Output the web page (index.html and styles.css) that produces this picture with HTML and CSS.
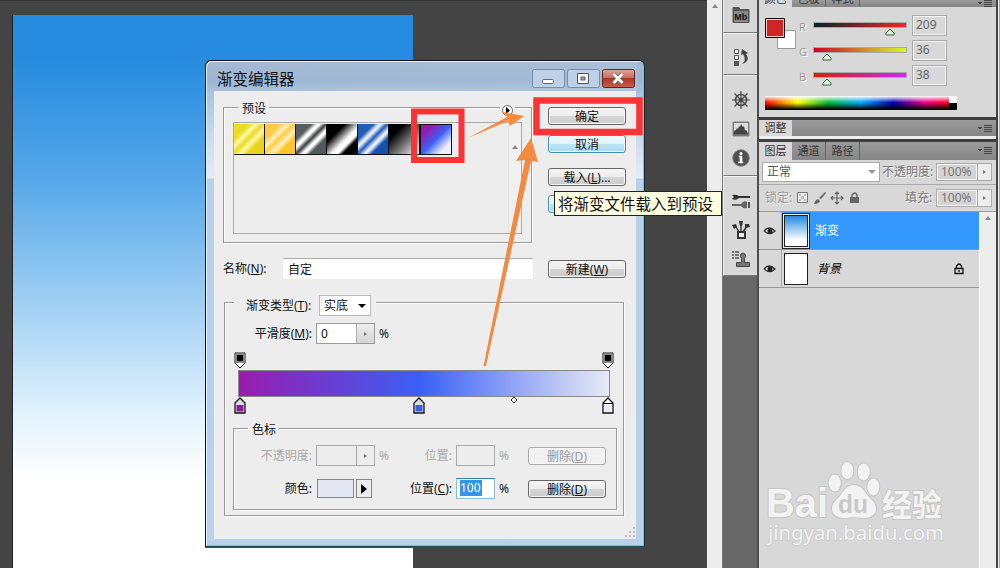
FILE: index.html
```html
<!DOCTYPE html>
<html lang="zh-CN">
<head>
<meta charset="utf-8">
<title>渐变编辑器</title>
<link rel="stylesheet" href="styles.css">
</head>
<body>
<div class="app">
  <main class="canvas"><div class="document"></div></main>
  <div class="scrollbar main-scroll"><i class="up"></i></div>

  <aside class="dock">
    <section class="dock-group g1">
      <svg width="20" height="20" viewBox="0 0 20 20"><path d="M2 17.500V2.500h6l1 2h9v13z" fill="#555" stroke="#555"/><path d="M3 6h14v11H3z" fill="#8a8a8a"/><text x="3.200" y="15" class="mb">Mb</text></svg>
    </section>
    <section class="dock-group g2"><div class="grip"></div>
      <svg width="20" height="20" viewBox="0 0 20 20"><path d="M3.500 2.500h4v4h-4zM3.500 8.500h4v4h-4z" fill="#f5f5f5" stroke="#555"/><path d="M3 14h5v5H3z" fill="#555"/><path d="M11 17q9-3 4-10l2-1-6-4-1 6 2-1q4 6-1 10z" fill="#444"/></svg>
    </section>
    <section class="dock-group g3"><div class="grip"></div>
      <svg width="20" height="20" viewBox="0 0 20 20" fill="none" stroke="#484848"><circle cx="10" cy="10" r="5.500" stroke-width="1.600"/><circle cx="10" cy="10" r="1.500" stroke-width="1.600"/><path d="M10 1v18M1 10h18M3.500 3.500l13 13M16.500 3.500l-13 13" stroke-width="1.200"/></svg>
      <svg width="20" height="20" viewBox="0 0 20 20"><path d="M2 3h16v14H2z" fill="#686868" stroke="#888"/><path d="M3 4h14v11H3z" fill="#ddd"/><path d="M3 15v-3l2-1 1-2 1 1 1-3 1 1 1-3 2 3 1-1 1 4 2 1 1 3z" fill="#444"/></svg>
      <svg width="20" height="20" viewBox="0 0 20 20"><circle cx="10" cy="10" r="8.200" fill="#505050" stroke="#777"/><circle cx="10" cy="5.500" r="1.500" fill="#fff"/><path d="M8 8h3v6h1v1H7.500v-1H9V9H8z" fill="#fff" stroke="#fff" stroke-width=".6"/></svg>
    </section>
    <section class="dock-group g4"><div class="grip"></div>
      <svg width="20" height="20" viewBox="0 0 20 20"><path d="M1 4q4-1 7 1h11v2H8q-3 3-7 1l2-2z" fill="#303030"/><path d="M1 13h9q3-4 6-2v6q-4 1-6-2H1z" fill="#666"/><path d="M18 11v6" stroke="#555" stroke-width="2"/></svg>
      <svg width="20" height="20" viewBox="0 0 20 20" fill="none" stroke="#333"><path d="M8 12L4 5M10 12V3M12 12l4-6" stroke-width="1.400"/><path d="M1 5l4-1 1 3-3 2zM8 1h4l-1 5H9zM14 4l4 0 1 3-5 1z" fill="#333" stroke="none"/><path d="M7 12h7v6H7z" fill="#eee" stroke-width="2"/></svg>
      <svg width="20" height="20" viewBox="0 0 20 20"><path d="M1 3h2M4 3h4M1 6h2M4 6h4M1 9h2M4 9h4" stroke="#555" stroke-width="1.300"/><path d="M5.500 13.500h5v-4q-2-2-.5-4.500 2-2 4 0 1.500 2.500-.5 4.500v4h5v4h-13z" fill="#777" stroke="#444"/></svg>
    </section>
  </aside>

  <aside class="panels">
    <section class="panel color-panel">
      <header class="tabs cut"><span class="tab on">颜色</span><span class="tab">色板</span><span class="tab">样式</span><i class="menu"></i></header>
      <div class="color-body">
        <svg class="swatches" width="34" height="34" viewBox="0 0 34 34"><path d="M12.500 12.500h18v18h-18z" fill="#fff" stroke="#999"/><path d="M.5.5h19v19H.5z" fill="#ecc" stroke="#111"/><path d="M2 2h16v16H2z" fill="#d12426"/></svg>
        <div class="channels">
          <div class="channel"><b>R</b><div class="track"><div class="ramp r"></div><svg style="margin-left:72px" width="10" height="8" viewBox="0 0 10 8"><path d="M1 7V5l4-4 4 4v2z" fill="#cfc" stroke="#555"/></svg></div><span class="num">209</span></div>
          <div class="channel"><b>G</b><div class="track"><div class="ramp g"></div><svg style="margin-left:9px" width="10" height="8" viewBox="0 0 10 8"><path d="M1 7V5l4-4 4 4v2z" fill="#cfc" stroke="#555"/></svg></div><span class="num">36</span></div>
          <div class="channel"><b>B</b><div class="track"><div class="ramp b"></div><svg style="margin-left:9px" width="10" height="8" viewBox="0 0 10 8"><path d="M1 7V5l4-4 4 4v2z" fill="#cfc" stroke="#555"/></svg></div><span class="num">38</span></div>
        </div>
      </div>
      <div class="spectrum"><i></i></div>
    </section>
    <section class="panel adjust-panel"><header class="tabs"><span class="tab on">调整</span><i class="menu"></i></header></section>
    <section class="panel layers-panel">
      <header class="tabs"><span class="tab on">图层</span><span class="tab">通道</span><span class="tab">路径</span><i class="menu"></i></header>
      <div class="opts blend-row"><div class="blend"><span>正常</span><i></i></div><label>不透明度:</label><div class="pct"><span>100%</span><i></i></div></div>
      <div class="opts lock-row"><label class="lock-label">锁定:</label>
        <svg width="66" height="14" viewBox="0 0 66 14"><path d="M1.500 1.500h10v10h-10z" fill="#eee" stroke="#777"/><path d="M3 3h2v2H3zM8 3h2v2H8zM5 5h3v3H5zM3 8h2v2H3zM8 8h2v2H8z" fill="#bbb"/><path d="M18 13q1-4 4-5l2 2q-1 3-6 3M23 7l6-6 1 1-5 6z" fill="#666"/><path d="M41 1v12M35 7h12M39 3l2-2 2 2M39 11l2 2 2-2M37 5l-2 2 2 2M45 5l2 2-2 2" fill="none" stroke="#666" stroke-width="1.200"/><path d="M56 7V4q3-4 5 0v3" fill="none" stroke="#666" stroke-width="1.500"/><path d="M54 6h9v6h-9z" fill="#666"/></svg>
        <label class="fill-label">填充:</label><div class="pct"><span>100%</span><i></i></div></div>
      <div class="layers">
        <div class="layer-list">
          <div class="layer selected"><div class="eye"><svg width="13" height="12" viewBox="0 0 13 12"><path d="M1 6q5-6 11 0-5 5-11 0" fill="#eee" stroke="#333" stroke-width="1.300"/><circle cx="7" cy="6" r="2.500" fill="#222"/></svg></div><div class="thumb sky"></div><span>渐变</span></div>
          <div class="layer"><div class="eye"><svg width="13" height="12" viewBox="0 0 13 12"><path d="M1 6q5-6 11 0-5 5-11 0" fill="#eee" stroke="#333" stroke-width="1.300"/><circle cx="7" cy="6" r="2.500" fill="#222"/></svg></div><div class="thumb"></div><span class="bg-name">背景</span><svg class="lock" width="10" height="12" viewBox="0 0 10 12"><path d="M2.500 5V3q2.500-4 5 0v2M1 5.500h8v5H1zM5 7v2" fill="none" stroke="#111" stroke-width="1.300"/></svg></div>
        </div>
        <div class="scrollbar"><i class="up"></i></div>
      </div>
    </section>
  </aside>

  <div class="dialog">
    <header class="titlebar"><h1>渐变编辑器</h1>
      <div class="winbtns">
        <svg width="33" height="19" viewBox="0 0 33 19"><rect x=".5" y=".5" width="32" height="18" rx="2" class="wb"/><rect x="10.500" y="10.500" width="11" height="4" rx="1" fill="#fff" stroke="#666"/></svg>
        <svg width="33" height="19" viewBox="0 0 33 19"><rect x=".5" y=".5" width="32" height="18" rx="2" class="wb"/><path d="M10.500 4.500h11v10h-11z" fill="#fff" stroke="#555"/><path d="M14 8h4v3h-4z" fill="#9ab" stroke="#555"/></svg>
        <svg width="33" height="19" viewBox="0 0 33 19"><defs><linearGradient id="red" x2="0" y2="1"><stop stop-color="#dfa69d"/><stop offset=".48" stop-color="#c9695f"/><stop offset=".5" stop-color="#ad3326"/><stop offset="1" stop-color="#c9604c"/></linearGradient></defs><rect x=".5" y=".5" width="32" height="18" rx="2" fill="url(#red)" stroke="#5c2528"/><path d="M11.500 5l9 9M20.500 5l-9 9" stroke="#665" stroke-width="4.500"/><path d="M11.500 5l9 9M20.500 5l-9 9" stroke="#fff" stroke-width="3"/></svg>
      </div>
    </header>
    <div class="content">
      <div class="top">
        <div class="group presets"><div class="legend-row"><span class="legend">预设</span><svg class="flyout" width="13" height="13" viewBox="0 0 13 13"><circle cx="6.500" cy="6.500" r="5" fill="#fff" stroke="#666"/><path d="M5 3v7l4-3.500z" fill="#000"/></svg></div>
          <div class="preset-box"><div class="preset-list"><i class="p1"></i><i class="p2"></i><i class="p3"></i><i class="p4"></i><i class="p5"></i><i class="p6"></i><i class="p7"></i></div><div class="preset-scroll"><i class="up"></i></div></div>
        </div>
        <div class="actions"><button>确定</button><button class="hot">取消</button><button>载入(<u>L</u>)...</button><button class="hot save" aria-label="存储"></button></div>
      </div>
      <div class="name-row"><label>名称(<u>N</u>):</label><div class="name-input">自定</div><button>新建(<u>W</u>)</button></div>
      <div class="group editor">
        <div class="type-legend"><label>渐变类型(<u>T</u>):</label><div class="select">实底<i></i></div></div>
        <div class="smooth"><label>平滑度(<u>M</u>):</label><div class="spin"><span>0</span><i></i></div><span>%</span></div>
        <div class="stops opacity-stops">
          <svg width="12" height="17" viewBox="0 0 12 17"><path d="M1 1h10v10l-5 5-5-5z" fill="#fff" stroke="#111"/><path d="M2 2h8v9H2z" fill="#888"/><path d="M3 3h6v6H3z"/></svg>
          <svg width="12" height="17" viewBox="0 0 12 17"><path d="M1 1h10v10l-5 5-5-5z" fill="#fff" stroke="#111"/><path d="M2 2h8v9H2z" fill="#888"/><path d="M3 3h6v6H3z"/></svg>
        </div>
        <div class="gradient-bar"></div>
        <div class="stops color-stops">
          <svg width="12" height="17" viewBox="0 0 12 17"><path d="M1 16V6l5-5 5 5v10z" fill="#ddd" stroke="#111" stroke-width="1.300"/><path d="M2.500 8h7v6.500h-7z" fill="#9018a4"/></svg>
          <svg class="mid-stop" width="12" height="17" viewBox="0 0 12 17"><path d="M1 16V6l5-5 5 5v10z" fill="#ddd" stroke="#111" stroke-width="1.300"/><path d="M2.500 8h7v6.500h-7z" fill="#3c5cf0"/></svg>
          <svg class="diamond" width="8" height="8" viewBox="0 0 8 8"><path d="M4 1l3 3-3 3-3-3z" fill="#fff" stroke="#333"/></svg>
          <svg class="end-stop" width="12" height="17" viewBox="0 0 12 17"><path d="M1 16V6l5-5 5 5v10z" fill="#fff" stroke="#111" stroke-width="1.300"/><path d="M1 6.500h10" stroke="#111"/><path d="M3 8h6v6H3z" fill="#e6e9f6"/></svg>
        </div>
        <div class="group stop-group"><span class="legend">色标</span>
          <div class="stop-row off"><label class="l1">不透明度:</label><div class="spin"><span></span><i></i></div><span class="pc">%</span><label class="l2">位置:</label><div class="pos"></div><span class="pc">%</span><button disabled>删除(<u>D</u>)</button></div>
          <div class="stop-row"><label class="l1">颜色:</label><div class="color-pick"><b></b><i></i></div><label class="l2">位置(<u>C</u>):</label><div class="pos focus"><mark>100</mark></div><span class="pc">%</span><button>删除(<u>D</u>)</button></div>
        </div>
      </div>
      <svg class="sizer" width="12" height="12" viewBox="0 0 12 12"><path d="M9 1h2v2H9zM5 5h2v2H5zM9 5h2v2H9zM1 9h2v2H1zM5 9h2v2H5zM9 9h2v2H9z" fill="#bbb"/></svg>
    </div>
  </div>

  <svg class="annotations" width="1000" height="568" viewBox="0 0 1000 568">
    <path d="M414 111.500h47.500v48.500H414z" fill="none" stroke="#fa3435" stroke-width="6"/>
    <path d="M536.500 100.500h103v31.500h-103z" fill="none" stroke="#fa3435" stroke-width="6.500"/>
    <path d="M468 138l39-21-4-5 21 4-14 10-2-5z" fill="#f88b3c"/>
    <path d="M483.500 366L525 160l-9 1 15-23 7 24-7-1L486 366z" fill="#f28b42"/>
  </svg>
  <div class="tooltip">将渐变文件载入到预设</div>
  <svg class="watermark" width="190" height="90" viewBox="0 0 190 90">
    <g class="halo">
      <text x="1" y="56.500" class="wm-bold" textLength="62" lengthAdjust="spacingAndGlyphs">Bai</text>
      <ellipse cx="69.700" cy="23" rx="6" ry="8.500"/><ellipse cx="82.300" cy="10.500" rx="6" ry="8.500"/><ellipse cx="98.700" cy="12" rx="6" ry="8.500"/><ellipse cx="108.300" cy="27" rx="6" ry="8.500"/>
      <path d="M89 25c9 0 11 9 17 14 10 9 4 20-8 19-7-1-11-1-18 0-12 1-18-10-8-19 6-5 8-14 17-14z"/>
    </g>
    <text x="73" y="53" class="wm-du" textLength="30" lengthAdjust="spacingAndGlyphs">du</text>
    <text x="117" y="55.500" class="wm-cjk halo" textLength="60" lengthAdjust="spacingAndGlyphs">经验</text>
    <text x="3" y="80" class="wm-url halo" textLength="176" lengthAdjust="spacingAndGlyphs">jingyan.baidu.com</text>
  </svg>
</div>
</body>
</html>
```

FILE: styles.css
```css
*{box-sizing:border-box}
body{margin:0;font:12px/16px "Noto Sans","Noto Sans CJK SC",sans-serif;color:#111}
i,b{font-style:normal;font-weight:400}
svg{display:block;flex:none}
.app{position:relative;display:flex;width:1000px;height:568px;overflow:hidden;background:#444}
.canvas{width:707px;padding:14px 0 0 12px;border-top:1px solid #353535}
.document{width:401px;height:554px;border-left:1px solid #222;background:linear-gradient(#268bde 0,#278cdf 8%,#54a6e8 29%,#a0cff3 52%,#e2f2fc 72%,#fff 84%)}
.scrollbar{width:16px;background:#ededed;display:flex;justify-content:center;padding-top:4px}
.main-scroll{border-right:1px solid #777}
.up{width:0;height:0;border:3px solid transparent;border-top:0;border-bottom:4px solid #888}

.dock{width:34px;background:#676767}
.dock-group{display:flex;flex-direction:column;align-items:center;background:#d8d8d8;border-bottom:1px solid #777;border-left:1px solid #eee}
.grip{width:27px;height:4px;background:radial-gradient(circle,#999 35%,transparent 40%) 0 0/2px 2px}
.g1{height:33px;padding-top:5px}
.g2{height:42px;padding-top:3px;gap:6px;border-top:1px solid #f4f4f4}
.g3{height:101px;padding-top:3px;gap:9px;border-top:1px solid #f4f4f4}
.g3 .grip{margin-bottom:-2px}
.g4{height:100px;padding-top:3px;gap:9px;border-top:1px solid #f4f4f4}
.g4 .grip{margin-bottom:-2px}
.mb{font:bold 9px "Liberation Sans",sans-serif;fill:#111}

.panels{flex:1;border-left:2px solid #4d4d4d;background:linear-gradient(90deg,#d8d8d8 237px,#444 237px 239px,#eee 239px 240px,#aaa 240px)}
.panel{width:237px}
.tabs{display:flex;height:18px;background:linear-gradient(#9b9b9b,#858585);overflow:hidden}
.tab{width:34px;text-align:center;font-size:11px;line-height:18px;color:#333;border-right:1px solid #666;white-space:nowrap}
.tab.on{background:#d8d8d8;width:33px;border:0}
.tabs.cut{height:7px;align-items:flex-end}
.cut .tab{line-height:16px;height:16px}
.menu{margin:5px 4px 0 auto;width:14px;height:7px;background:linear-gradient(#444 1px,transparent 1px 2px,#444 2px 3px,transparent 3px 4px,#444 4px 5px,transparent 5px 6px,#444 6px) 6px 0/8px 7px no-repeat,linear-gradient(#444,#444) 0 2px/4px 1px no-repeat,linear-gradient(#444,#444) 1px 3px/2px 1px no-repeat}
.color-panel{height:120px;border-bottom:3px solid #3e3e3e;background:#d8d8d8}
.color-body{display:flex;height:88px;padding:7px 0 0 6px}
.swatches{margin-top:4px}
.channels{width:150px}
.channel{display:flex;height:25px}
.channel b{width:14px;padding:5px 0 0 0;font-size:11px;color:#999;text-shadow:1px 1px #fff}
.track{width:94px;padding-top:8px}
.ramp{height:6px;width:94px;border:1px solid #aaa}
.ramp.r{background:linear-gradient(90deg,#002426,#ff2426)}
.ramp.g{background:linear-gradient(90deg,#d10026,#d1ff26)}
.ramp.b{background:linear-gradient(90deg,#d12400,#d124ff)}
.num{flex:none;width:35px;height:21px;margin:1px 0 0 5px;padding-left:3px;border:1px solid #aaa;outline:1px solid #f4f4f4;outline-offset:-2px;color:#666;font-size:12px;line-height:18px}
.spectrum{width:192px;height:14px;margin-left:6px;margin-top:1px;display:flex;justify-content:flex-end;background:linear-gradient(#fff 0,transparent 45%,transparent 50%,#000 95%),linear-gradient(90deg,#f00,#ff0 17%,#0b3 33%,#0af 50%,#00a 67%,#e08 83%,#f00)}
.spectrum i{width:8px;background:linear-gradient(#fff 50%,#000 50%)}
.adjust-panel{height:22px;border-bottom:3px solid #3e3e3e;background:#eee}
.adjust-panel .tabs{height:16px}
.adjust-panel .tab{line-height:16px}
.opts{display:flex;align-items:center;color:#777}
.opts label{white-space:nowrap;text-shadow:1px 1px #f2f2f2}
.blend-row{height:25px;border-bottom:1px solid #aaa;padding:0 4px 0 3px}
.blend{display:flex;align-items:center;width:118px;height:20px;padding-left:4px;border:1px solid #aaa;background:#fff;color:#555;margin-right:2px;justify-content:space-between}
.blend i{border:4px solid transparent;border-top-color:#999;border-bottom:0;margin-right:3px}
.pct{display:flex;width:56px;height:18px;margin-left:auto;border:1px solid #aaa;background:#d4d4d4;flex:none}
.pct span{width:40px;padding-left:3px;line-height:13px;border:1px solid #f5f5f5}
.pct i,.spin i{flex:1;border-left:1px solid #aaa;background:#eee;display:flex;align-items:center;justify-content:center}
.pct i:after,.spin i:after{content:"";border:2px solid transparent;border-left:3px solid #777;border-right:0}
.lock-row{height:26px;padding:0 4px 0 6px}
.lock-label{width:31px;color:#999}
.fill-label{margin-left:43px}
.layers{display:flex;height:357px;border-top:1px solid #999}
.layer-list{width:220px}
.layer{height:38px;display:flex;align-items:center;border-bottom:1px solid #999}
.eye{width:23px;height:37px;background:#d8d8d8;border-right:1px solid #aaa;display:flex;align-items:center;justify-content:center;padding-right:2px}
.thumb{width:24px;height:32px;background:#fff;border:1px solid #222;margin:0 7px 0 2px}
.sky{background:linear-gradient(#238ade,#fff 80%);outline:1px solid #eee;box-shadow:0 0 0 2px #222}
.selected{background:#3399ff;color:#fff}
.bg-name{font-style:italic;margin-left:2px;color:#000}
.lock{margin:0 15px 0 auto}
.layers .scrollbar{width:17px;border-left:1px solid #fff}

.dialog{position:absolute;left:205px;top:60px;width:440px;height:488px;padding:0 7px;border:1px solid #111;border-right-color:#172d36;border-bottom:2px solid #234e56;border-radius:6px 6px 1px 1px;background:linear-gradient(#a5b9d2 0,#9db6d3 20px,#aac4df 32px,#e1eaf5 110px,#e4edf7 117px,#b8d0ea 118px,#b9d1eb);box-shadow:inset 1px 1px #e7f4fc,inset -1px -1px #65cde3}
.titlebar{display:flex;height:30px;padding:8px 2px 0 4px;justify-content:space-between;background:linear-gradient(90deg,transparent,rgba(205,222,240,.15))}
.titlebar h1{margin:0;font-size:15.5px;line-height:20px;font-weight:400;white-space:nowrap}
.winbtns{display:flex;gap:2px}
.wb{fill:#bdd0e5;stroke:#778da7}
.content{width:422px;height:448px;margin-left:1px;padding:16px 0 0 9px;background:#ededed}
.group{border:1px solid #999;box-shadow:1px 1px #fff,inset 1px 1px #fff}
.legend{display:block;width:31px;padding:0 4px;background:#ededed;line-height:18px;white-space:nowrap}
.top{display:flex;height:136px;justify-content:space-between;width:403px}
.presets{width:309px;height:136px;padding:0 9px}
.legend-row{display:flex;justify-content:space-between;height:16px;margin-top:-8px;padding-left:5px}
.flyout{margin:4px 8px 0 0;background:#ededed;outline:1px solid #ededed}
.preset-box{display:flex;justify-content:space-between;height:112px;width:289px;border:1px solid #aaa;margin-top:6px;padding-top:1px}
.preset-list{display:flex;height:31px}
.preset-list i{width:31px;height:31px;border-right:1px solid #111;border-bottom:1px solid #111}
.preset-scroll{width:13px;height:109px;padding:5px 0 0 3px;border-left:1px solid #e2e2e2;background:#f0f0f0}
.p1{background:linear-gradient(135deg,#ecdb25 26%,#fff9a4 37%,#ebda28 48%,#fff9a4 60%,#e7d31c 72%)}
.p2{background:linear-gradient(135deg,#ffcb45 25%,#fff0bc 38%,#ffcc43 48%,#fff0bc 61%,#ffc62d 72%)}
.p3{background:linear-gradient(135deg,#555e60 26%,#fff 36% 40%,#444b4c 49%,#444b4c 51%,#fff 60% 64%,#50595b 73%)}
.p4{background:linear-gradient(135deg,#000 30%,#fff 58% 67%,#000 76%)}
.p5{background:linear-gradient(135deg,#205bb4 26%,#e6eeff 36% 39%,#205bb4 49%,#e6eeff 60% 63%,#1551ad 73%)}
.p6{background:linear-gradient(135deg,#000 25%,#fff)}
.preset-list .p7{width:32px;background:linear-gradient(135deg,#9818ad 18%,#3c5ff5 50%,#f0f1ff 80%);border:1px solid #111}
button{font:inherit;width:78px;height:18px;padding:1px 0 0;border:1px solid #666;border-radius:3px;background:linear-gradient(#f5f5f5,#ececec 48%,#d5d5d5 50%,#ccc);box-shadow:inset 0 0 0 1px #f6f6f6;color:#111;line-height:16px;white-space:nowrap}
.actions{display:flex;flex-direction:column}
.actions button:nth-child(2){margin-top:10px}
.actions button:nth-child(3){margin-top:15px}
.actions .save{margin-top:9px}
.hot{background:linear-gradient(#eefaff,#dff4ff 48%,#bce4f8 50%,#a9d9f2);border-color:#468fae}
.name-row{display:flex;align-items:center;width:403px;height:21px;margin-top:15px}
.name-row label{width:60px}
.name-input{width:250px;height:21px;padding-left:5px;line-height:21px;background:#fff;border-top:1px solid #aaa}
.name-row button{margin-left:auto}
.editor{width:400px;height:214px;margin:23px 0 0 1px;padding:0 7px 0 8px}
.type-legend{display:flex;align-items:center;width:142px;height:22px;margin:-9px 0 0 1px;background:#ededed}
.type-legend label{width:85px;padding:2px 0 0 12px;white-space:nowrap}
.select{display:flex;align-items:center;justify-content:space-between;width:52px;height:21px;padding:1px 4px 0;background:#fff;border:1px solid #bbb;white-space:nowrap}
.select i{border:4px solid transparent;border-top-color:#000;border-bottom:0}
.smooth{display:flex;align-items:center;height:21px;margin-top:7px}
.smooth label{width:83px;padding-right:4px;text-align:right;white-space:nowrap}
.spin{display:flex;flex:none;width:59px;height:21px;margin-right:4px;border:1px solid #999;background:#fff}
.spin span{width:39px;padding-left:4px;line-height:19px}
.spin i{background:linear-gradient(#eee,#d5d5d5)}
.stops{display:flex;width:380px;margin-left:1px}
.opacity-stops{justify-content:space-between;margin-top:8px}
.gradient-bar{height:27px;width:372px;margin:1px 0 0 5px;border:1px solid #888;background:linear-gradient(90deg,#991cae,#3a60f5 49%,#e8eaf6)}
.color-stops{height:17px}
.mid-stop{margin-left:167px}
.diamond{margin:-1px 0 0 85px}
.end-stop{margin-left:auto}
.stop-group{width:384px;height:82px;margin-top:14px;padding-left:9px}
.stop-group .legend{margin:-8px 0 0 5px}
.stop-row{display:flex;align-items:center;height:21px;margin-top:6px}
.stop-row+.stop-row{margin-top:12px}
.l1,.l2{flex:none;text-align:right;white-space:nowrap}
.l1{width:73px;padding-right:4px}
.l2{width:48px;margin-left:16px;padding-right:4px}
.pc{width:13px}
.pos{width:39px;height:21px;margin-right:4px;border:1px solid #aaa;padding:1px 3px}
.focus{background:#fff;border-color:#87bddf;border-top-color:#397dac}
.focus mark{display:block;width:22px;background:#3795e8;color:#fff;font-size:12px}
.stop-row button{margin-left:16px}
.off{color:#aaa}
.off .spin,.off .spin i{background:#ededed;border-color:#aaa}
.off button{color:#999;border-color:#aaa;background:#f1f1f1}
.color-pick{display:flex;width:58px;gap:2px;margin:0 17px 0 1px}
.color-pick b{width:37px;height:19px;border:1px solid #888;background:#e4e8f5}
.color-pick i{display:flex;align-items:center;justify-content:center;width:16px;height:19px;border:1px solid #888}
.color-pick i:after{content:"";border:5px solid transparent;border-left:6px solid #000;border-right:0}
.sizer{margin:10px 0 0 401px}

.annotations{position:absolute;left:0;top:0;pointer-events:none}
.tooltip{position:absolute;left:554px;top:191px;width:168px;height:25px;padding-left:3px;border:1px solid #222;background:#ffffe1;font-size:15.5px;line-height:24px;white-space:nowrap}
.watermark{position:absolute;left:765px;top:460px}
.halo{fill:#f3f3f3;stroke:#c6c6c6;stroke-width:2;paint-order:stroke}
.wm-bold{font:bold 41px "Liberation Sans",sans-serif}
.wm-du{font:bold 25px "Liberation Sans",sans-serif;fill:#c9c9c9}
.wm-cjk{font:bold 31px "Noto Sans CJK SC",sans-serif}
.wm-url{font:20px "Noto Sans",sans-serif;stroke-width:1.2}
```
